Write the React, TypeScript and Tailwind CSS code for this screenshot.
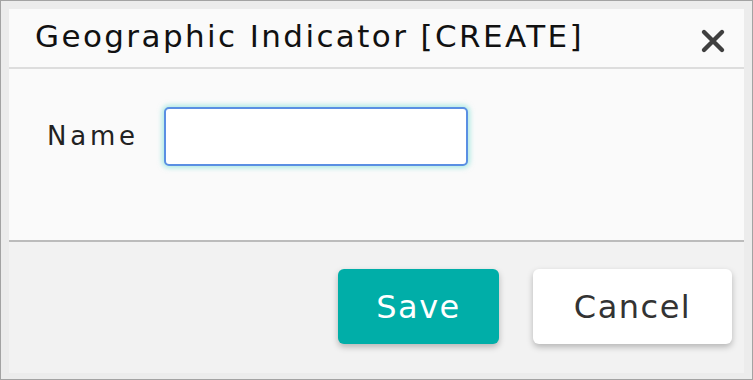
import React from "react";

export default function App() {
  return (
    <div className="w-[753px] h-[380px] bg-[#ececec] border border-[#a3a3a3] pt-[8px] px-[8px] pb-[6px] flex flex-col" style={{ fontFamily: '"DejaVu Sans", "Open Sans", sans-serif' }}>
      <div className="flex-1 flex flex-col bg-[#f2f2f2]">
        <div className="h-[60px] bg-[#fafafa] border-b-2 border-[#dddddd] flex items-center justify-between pl-[26px] pr-[18px]">
          <span className="text-[31px] leading-none text-[#111] tracking-[2.4px] mt-[-3px]">Geographic Indicator [CREATE]</span>
          <svg width="26" height="26" viewBox="0 0 26 26" className="mt-[6px]">
            <path d="M4 4 L22 22 M22 4 L4 22" stroke="#3f3f3f" strokeWidth="4.4" strokeLinecap="round" />
          </svg>
        </div>
        <div className="h-[173px] bg-[#fafafa] border-b-2 border-[#bcbcbc] flex items-start pl-[38px] pt-[38px]">
          <span className="w-[117px] shrink-0 text-[26px] tracking-[3.8px] text-[#222] mt-[16px] leading-none">Name</span>
          <input className="w-[304px] h-[59px] bg-white border-2 border-[#5a8fe3] rounded-[5px] shadow-[0_0_5px_2px_rgba(110,220,210,0.55)] outline-none" />
        </div>
        <div className="flex-1 flex justify-end items-start pt-[27px] pr-[12px] gap-[34px]">
          <button className="w-[161px] h-[75px] bg-[#00aea8] text-white text-[32px] tracking-[1.5px] rounded-[6px] shadow-[0_3px_6px_rgba(0,0,0,0.25)]">Save</button>
          <button className="w-[199px] h-[75px] bg-white text-[#333] text-[32px] tracking-[1.5px] rounded-[6px] shadow-[0_3px_6px_rgba(0,0,0,0.25)]">Cancel</button>
        </div>
      </div>
    </div>
  );
}
